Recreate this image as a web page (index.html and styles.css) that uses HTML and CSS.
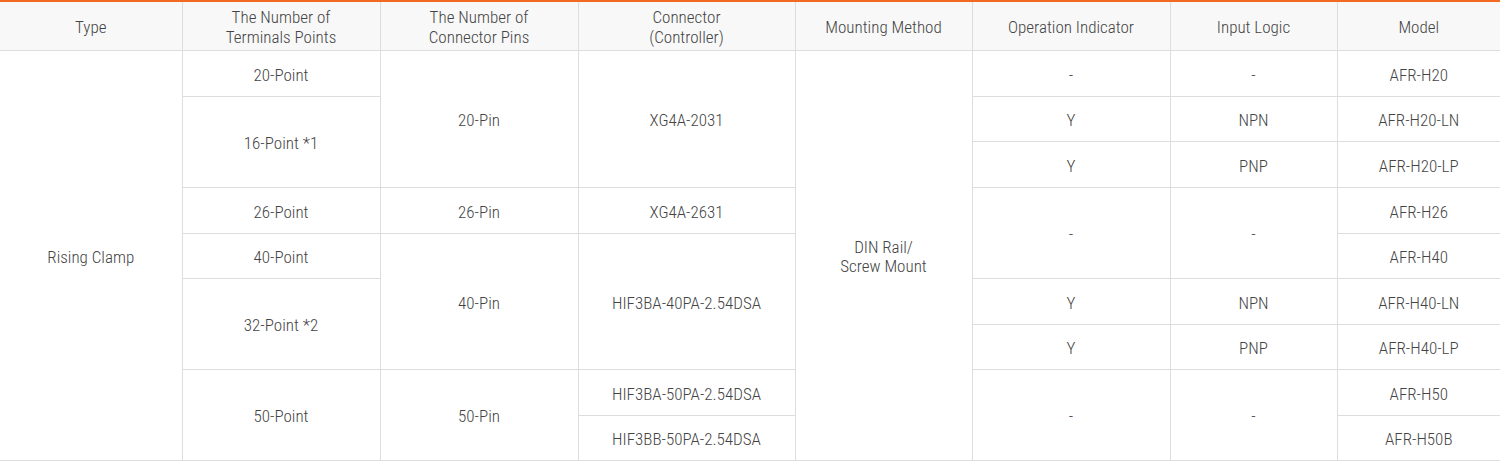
FILE: index.html
```html
<!DOCTYPE html>
<html>
<head>
<meta charset="utf-8">
<link rel="stylesheet" href="styles.css">
</head>
<body>
<table class="spec">
  <colgroup>
    <col class="c1"><col class="c2"><col class="c3"><col class="c4"><col class="c5"><col class="c6"><col class="c7"><col class="c8">
  </colgroup>
  <thead>
    <tr class="head">
      <th>Type</th>
      <th>The Number of<br>Terminals Points</th>
      <th>The Number of<br>Connector Pins</th>
      <th>Connector<br>(Controller)</th>
      <th>Mounting Method</th>
      <th>Operation Indicator</th>
      <th>Input Logic</th>
      <th>Model</th>
    </tr>
  </thead>
  <tbody>
    <tr class="r46">
      <td rowspan="9" class="first">Rising Clamp</td>
      <td>20-Point</td>
      <td rowspan="3">20-Pin</td>
      <td rowspan="3">XG4A-2031</td>
      <td rowspan="9">DIN Rail/<br>Screw Mount</td>
      <td>-</td>
      <td>-</td>
      <td>AFR-H20</td>
    </tr>
    <tr class="r45">
      <td rowspan="2">16-Point *1</td>
      <td>Y</td>
      <td>NPN</td>
      <td>AFR-H20-LN</td>
    </tr>
    <tr class="r46">
      <td>Y</td>
      <td>PNP</td>
      <td>AFR-H20-LP</td>
    </tr>
    <tr class="r46">
      <td>26-Point</td>
      <td>26-Pin</td>
      <td>XG4A-2631</td>
      <td rowspan="2">-</td>
      <td rowspan="2">-</td>
      <td>AFR-H26</td>
    </tr>
    <tr class="r45">
      <td>40-Point</td>
      <td rowspan="3">40-Pin</td>
      <td rowspan="3">HIF3BA-40PA-2.54DSA</td>
      <td>AFR-H40</td>
    </tr>
    <tr class="r46">
      <td rowspan="2">32-Point *2</td>
      <td>Y</td>
      <td>NPN</td>
      <td>AFR-H40-LN</td>
    </tr>
    <tr class="r45">
      <td>Y</td>
      <td>PNP</td>
      <td>AFR-H40-LP</td>
    </tr>
    <tr class="r46">
      <td rowspan="2">50-Point</td>
      <td rowspan="2">50-Pin</td>
      <td>HIF3BA-50PA-2.54DSA</td>
      <td rowspan="2">-</td>
      <td rowspan="2">-</td>
      <td>AFR-H50</td>
    </tr>
    <tr class="r45">
      <td>HIF3BB-50PA-2.54DSA</td>
      <td>AFR-H50B</td>
    </tr>
  </tbody>
</table>
</body>
</html>
```
FILE: styles.css
```css
html, body {
  margin: 0;
  padding: 0;
  background: #ffffff;
}
body {
  font-family: "Roboto Condensed", "Liberation Sans Narrow", "Roboto", sans-serif;
  font-size: 17px;
  font-weight: 300;
  color: #444444;
}
.spec {
  width: 1500px;
  border-collapse: collapse;
  table-layout: fixed;
  border-top: 2px solid #f26a21;
}
.c1 { width: 182px; }
.c2 { width: 198px; }
.c3 { width: 198px; }
.c4 { width: 217px; }
.c5 { width: 177px; }
.c6 { width: 198px; }
.c7 { width: 167px; }
.c8 { width: 163px; }
.spec th, .spec td {
  border: 1px solid #dddddd;
  text-align: center;
  vertical-align: middle;
  padding: 4px 4px 0;
  line-height: 19px;
  font-weight: 300;
}
.spec th {
  background: #f8f8f8;
  color: #444444;
  line-height: 20px;
  padding-top: 3px;
}
.spec tr > :first-child { border-left: none; }
.spec tr > :last-child { border-right: none; }
.spec td.first { border-left: none; }
.head { height: 49px; }
.r46 { height: 46px; }
.r45 { height: 45px; }
```
